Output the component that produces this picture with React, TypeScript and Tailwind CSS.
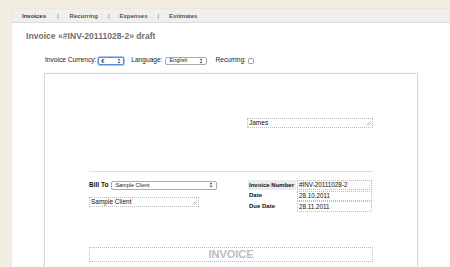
import React from "react";

const Arrows = () => (
  <svg width="4" height="6" viewBox="0 0 4 6" className="shrink-0">
    <path d="M0.5 2.2 L2 0.6 L3.5 2.2 Z M0.5 3.8 L2 5.4 L3.5 3.8 Z" fill="#444" />
  </svg>
);

const Grip = () => (
  <svg width="5" height="5" viewBox="0 0 5 5" className="absolute right-[1px] bottom-[1px]">
    <path d="M4.5 0.5 L0.5 4.5 M4.5 2.5 L2.5 4.5" stroke="#999" strokeWidth="0.7" />
  </svg>
);

export default function App() {
  return (
    <div
      className="w-[450px] h-[267px] overflow-hidden bg-[#f2efe2] pl-[12px] pt-[9px]"
      style={{ fontFamily: '"Liberation Sans", Arial, sans-serif' }}
    >
      <div className="bg-white h-[258px] w-[438px] shadow-[0_0_1px_rgba(0,0,0,0.15)]">
        {/* nav */}
        <div className="h-[14px] bg-[#efefef] border-b border-[#dcdcdc] flex items-center pl-[10px] text-[6px] font-bold text-[#555] leading-none">
          <span className="text-[#333]">Invoices</span>
          <span className="mx-[11px] font-normal text-[#666]">|</span>
          <span>Recurring</span>
          <span className="mx-[10px] font-normal text-[#666]">|</span>
          <span>Expenses</span>
          <span className="mx-[10px] font-normal text-[#666]">|</span>
          <span>Estimates</span>
        </div>

        {/* heading */}
        <div className="pl-[14px] pt-[8px] h-[25px] text-[8.6px] font-bold text-[#707070] leading-[11px]">
          Invoice «#INV-20111028-2» draft
        </div>

        {/* controls */}
        <div className="h-[25px] flex items-start pt-[8px] pl-[33px] text-[6.6px] text-[#222] leading-none">
          <div className="flex items-center h-[9px]">
            <span>Invoice Currency:</span>
            <div className="ml-[2px] w-[26px] h-[8px] rounded-[2px] border border-[#5b8fd6] shadow-[0_0_0_1px_#a9c6f0] bg-white flex items-center justify-between px-[2px] text-[6px]">
              <span>€</span>
              <Arrows />
            </div>
          </div>
          <div className="flex items-center h-[9px] ml-[7px]">
            <span>Language:</span>
            <div className="ml-[3px] w-[42px] h-[8px] rounded-[2px] border border-[#aaa] bg-white flex items-center justify-between px-[3px] text-[5.5px]">
              <span>English</span>
              <Arrows />
            </div>
          </div>
          <div className="flex items-center h-[9px] ml-[8px]">
            <span>Recurring:</span>
            <div className="ml-[2px] w-[6px] h-[6px] rounded-[1.5px] border border-[#999] bg-white" />
          </div>
        </div>

        {/* invoice page */}
        <div className="ml-[32px] w-[374px] h-[200px] border border-[#d9d9d9] shadow-[0_0_2px_rgba(0,0,0,0.08)] pl-[44px] pr-[44px] pt-[44px]">
          <div className="flex justify-end">
            <div className="relative w-[126px] h-[10px] border border-dotted border-[#bbb] text-[6.5px] text-[#111] leading-[8px] pl-[1px]">
              James
              <Grip />
            </div>
          </div>

          <div className="mt-[43px] h-px bg-[#dedede]" />

          <div className="mt-[8px] flex justify-between">
            <div className="flex flex-col">
              <div className="flex items-center h-[10px]">
                <span className="text-[6.5px] font-bold text-[#111]">Bill To</span>
                <div className="ml-[3px] w-[106px] h-[9px] rounded-[2px] border border-[#aaa] bg-white flex items-center justify-between px-[3px] text-[5.5px] text-[#222]">
                  <span>Sample Client</span>
                  <Arrows />
                </div>
              </div>
              <div className="relative mt-[7px] w-[110px] h-[10px] border border-dotted border-[#bbb] text-[6.5px] text-[#111] leading-[8px] pl-[1px]">
                Sample Client
                <Grip />
              </div>
            </div>

            <div className="flex flex-col text-[6px] text-[#111] mr-[1px] w-[124px]">
              <div className="flex h-[10px] items-stretch">
                <div className="w-[48px] bg-[#ececec] font-bold flex items-center pl-[1px]">Invoice Number</div>
                <div className="ml-[1px] flex-1 border border-dotted border-[#bbb] bg-[#fbfbfb] flex items-center pl-[1px] text-[6.3px]">#INV-20111028-2</div>
              </div>
              <div className="flex h-[10.5px] items-stretch mt-[0.5px]">
                <div className="w-[48px] font-bold flex items-center pl-[1px]">Date</div>
                <div className="ml-[1px] flex-1 border border-dotted border-[#bbb] flex items-center pl-[1px] text-[6.3px]">28.10.2011</div>
              </div>
              <div className="flex h-[10.5px] items-stretch">
                <div className="w-[48px] font-bold flex items-center pl-[1px]">Due Date</div>
                <div className="ml-[1px] flex-1 border border-dotted border-[#bbb] flex items-center pl-[1px] text-[6.3px]">28.11.2011</div>
              </div>
            </div>
          </div>

          <div className="mt-[35px] h-[15px] border border-dotted border-[#bbb] flex items-center justify-center text-[11px] font-bold text-[#bdbdbd] leading-none">
            INVOICE
          </div>
        </div>
      </div>
    </div>
  );
}
